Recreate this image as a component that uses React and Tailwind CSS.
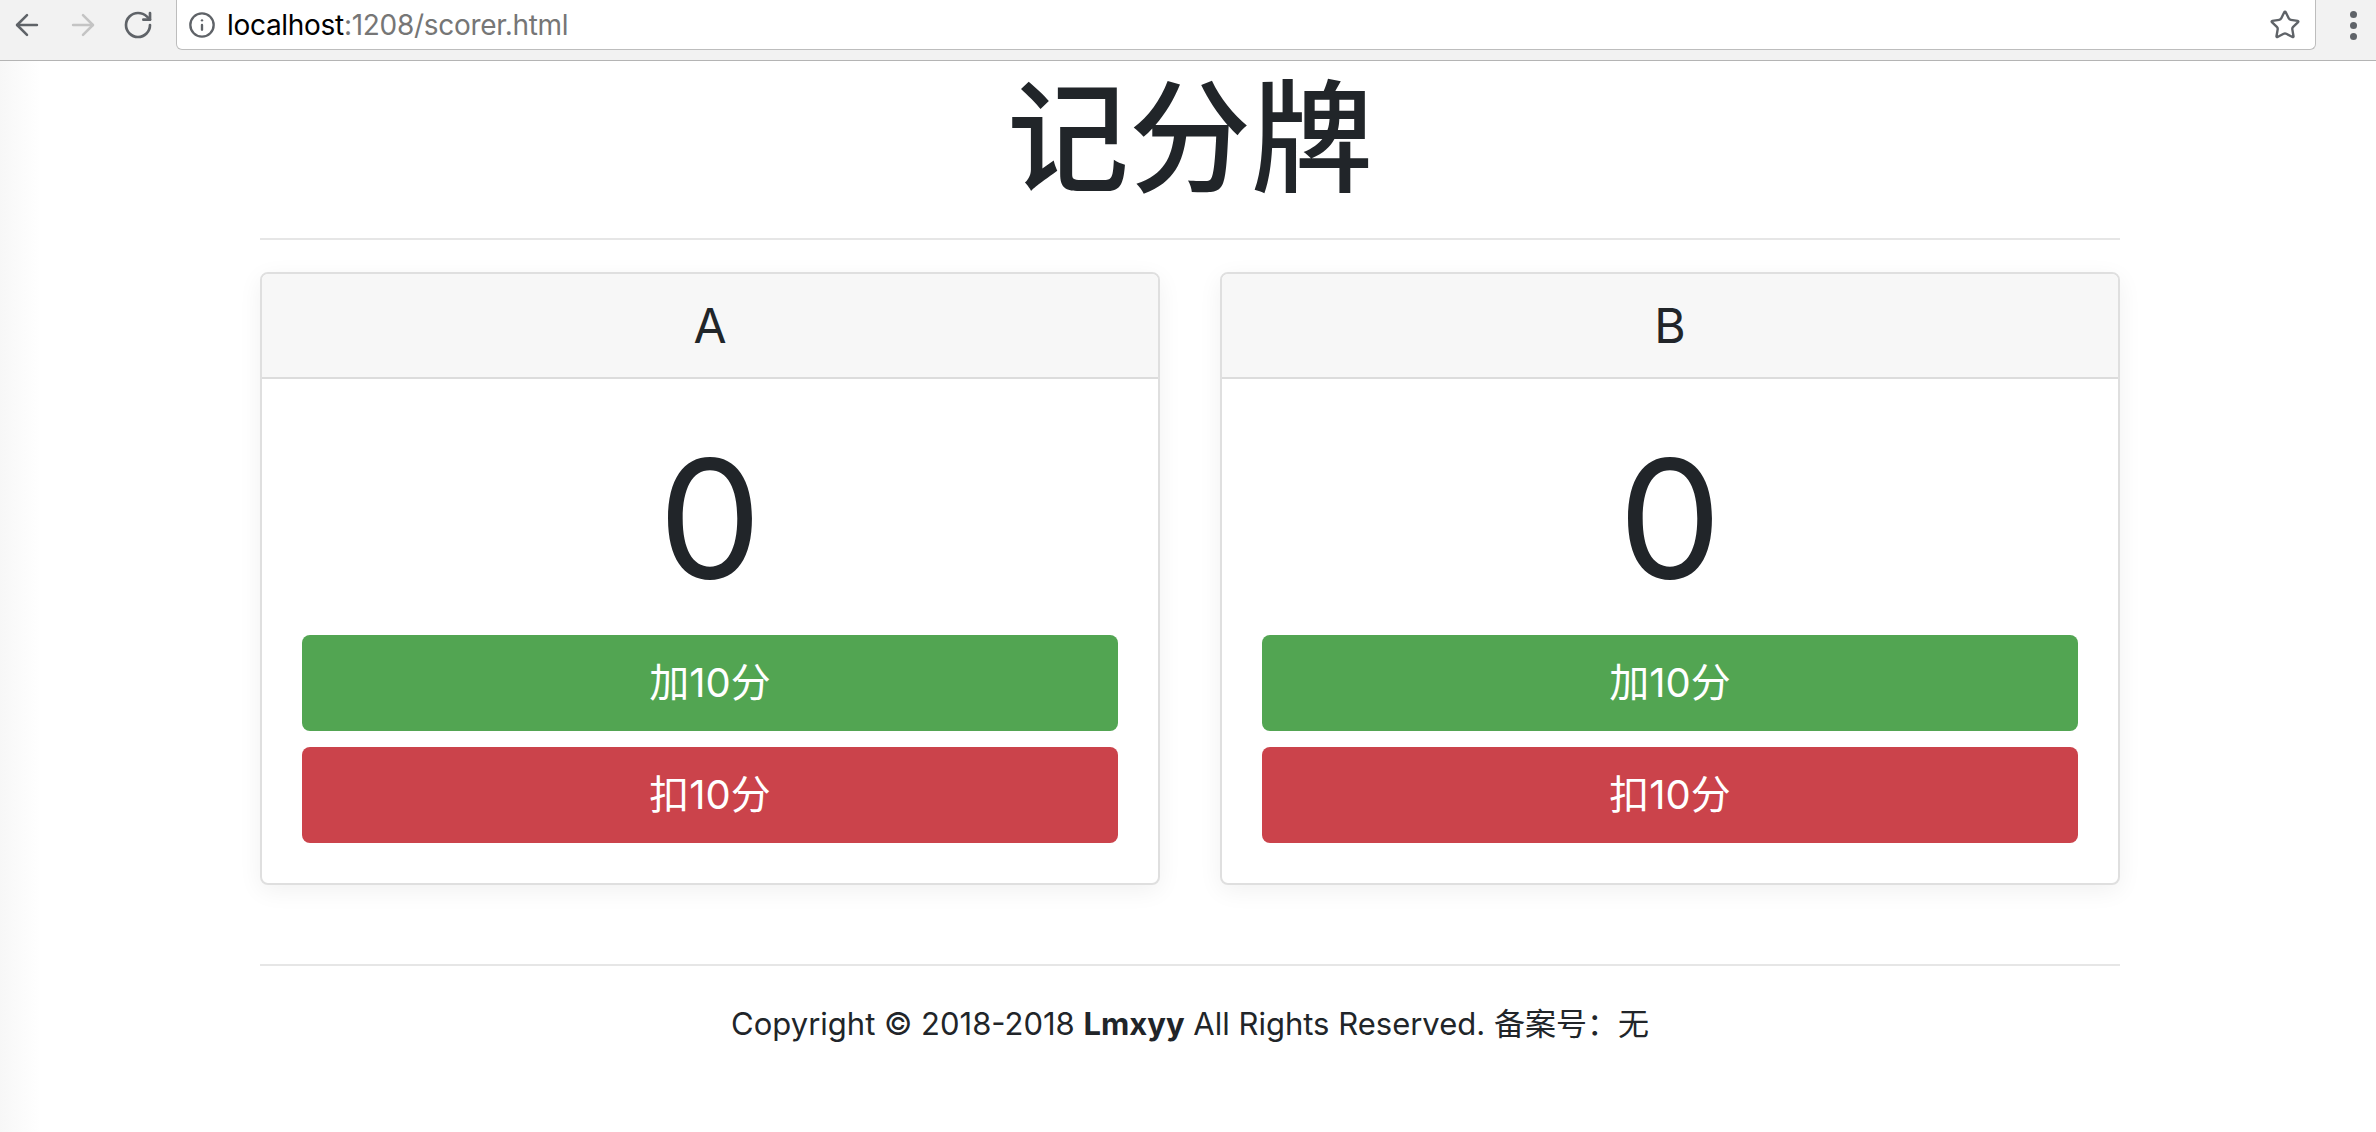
import { ArrowLeft, ArrowRight, RotateCw, Info, Star } from "lucide-react";

const teams = ["A", "B"];

function BrowserBar() {
  return (
    <div className="flex items-start h-[61px] bg-[#f2f2f2] border-b border-[#b4b4b4]">
      <div className="flex items-center h-[50px] pl-[10px] gap-[22px] text-[#5f6368]">
        <ArrowLeft size={34} strokeWidth={1.8} />
        <ArrowRight size={34} strokeWidth={1.8} className="text-[#c4c4c4]" />
        <RotateCw size={32} strokeWidth={2} />
      </div>
      <div className="ml-[22px] flex items-center h-[50px] w-[2140px] bg-white border border-t-0 border-[#bdbdbd] rounded-b-[6px] pl-[11px] pr-[14px]">
        <Info size={28} strokeWidth={2} className="text-[#5f6368]" />
        <span className="ml-[11px] text-[28px] font-['Inter',sans-serif] tracking-[-0.3px] text-black">
          localhost<span className="text-[#767676]">:1208/scorer.html</span>
        </span>
        <Star size={32} strokeWidth={1.8} className="ml-auto text-[#5f6368]" />
      </div>
      <div className="flex flex-col items-center gap-[4px] ml-[34px] mt-[11px]">
        <div className="w-[7px] h-[7px] rounded-full bg-[#5f6368]" />
        <div className="w-[7px] h-[7px] rounded-full bg-[#5f6368]" />
        <div className="w-[7px] h-[7px] rounded-full bg-[#5f6368]" />
      </div>
    </div>
  );
}

function ScoreCard({ name }) {
  return (
    <div className="border-2 border-[#dfdfdf] rounded-[8px] bg-white shadow-[0_6px_24px_rgba(0,0,0,0.06)] overflow-hidden">
      <div className="h-[105px] flex items-center justify-center bg-[#f7f7f7] border-b-2 border-[#dcdcdc] text-[48px]">
        {name}
      </div>
      <div className="p-[40px]">
        <div className="h-[200px] mb-[16px] flex items-center justify-center text-[164px] leading-none">0</div>
        <button className="w-full h-[96px] rounded-[8px] bg-[#52a552] text-white text-[40px] font-['Inter','Noto_Sans_CJK_SC',sans-serif]">
          加10分
        </button>
        <button className="mt-[16px] w-full h-[96px] rounded-[8px] bg-[#cb434b] text-white text-[40px] font-['Inter','Noto_Sans_CJK_SC',sans-serif]">
          扣10分
        </button>
      </div>
    </div>
  );
}

export default function App() {
  return (
    <div className="min-h-screen bg-[linear-gradient(to_right,#f7f7f7,#ffffff_40px)] font-['Inter','Noto_Sans_CJK_SC',sans-serif] text-[#212529]">
      <BrowserBar />
      <div className="w-[1860px] ml-[260px]">
        <h1 className="h-[134px] flex items-center justify-center text-[122px] font-['Noto_Sans_CJK_SC',sans-serif] font-medium">
          记分牌
        </h1>
        <div className="mt-[43px] h-[2px] bg-[#e6e6e6]" />
        <div className="mt-[32px] grid grid-cols-2 gap-[60px]">
          {teams.map((t) => (
            <ScoreCard key={t} name={t} />
          ))}
        </div>
        <div className="mt-[79px] h-[2px] bg-[#e6e6e6]" />
        <p className="mt-[34px] text-center text-[31px] leading-[48px]">
          Copyright © 2018-2018 <b>Lmxyy</b> All Rights Reserved. 备案号：无
        </p>
      </div>
    </div>
  );
}
